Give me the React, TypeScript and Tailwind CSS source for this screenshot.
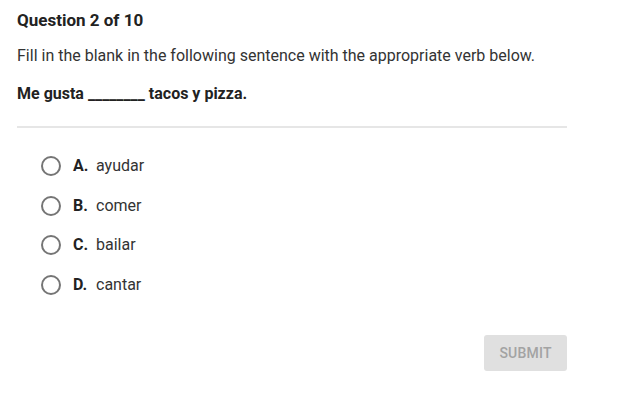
const OPTIONS = [
  { letter: "A.", text: "ayudar" },
  { letter: "B.", text: "comer" },
  { letter: "C.", text: "bailar" },
  { letter: "D.", text: "cantar" },
];

export default function App() {
  return (
    <div className="w-[641px] h-[413px] bg-white text-[#222] font-['Roboto',sans-serif]">
      <div className="w-[550px] ml-[17px] pt-[9px]">
        <h1 className="text-[17px] font-bold leading-[22px]">Question 2 of 10</h1>
        <p className="mt-[15px] text-[16px] leading-[20px] text-[#333]">
          Fill in the blank in the following sentence with the appropriate verb below.
        </p>
        <p className="mt-[18px] text-[16px] font-bold leading-[20px]">
          Me gusta ________ tacos y pizza.
        </p>
        <div className="mt-[22px] h-[2px] bg-[#e6e6e6]" />

        <div className="mt-[28px] ml-[24px] flex flex-col gap-[19.7px]">
          {OPTIONS.map((o) => (
            <label key={o.letter} className="flex items-center h-[20px]">
              <span className="w-[20px] h-[20px] rounded-full border-2 border-[#757575]" />
              <span className="ml-[12px] w-[23px] text-[16px] font-bold">{o.letter}</span>
              <span className="text-[16px] text-[#333]">{o.text}</span>
            </label>
          ))}
        </div>

        <div className="mt-[40px] flex justify-end">
          <button className="w-[83px] h-[36px] rounded-[3px] bg-[#e0e0e0] text-[14px] font-medium text-[#a3a3a3] tracking-[0.2px]">
            SUBMIT
          </button>
        </div>
      </div>
    </div>
  );
}
